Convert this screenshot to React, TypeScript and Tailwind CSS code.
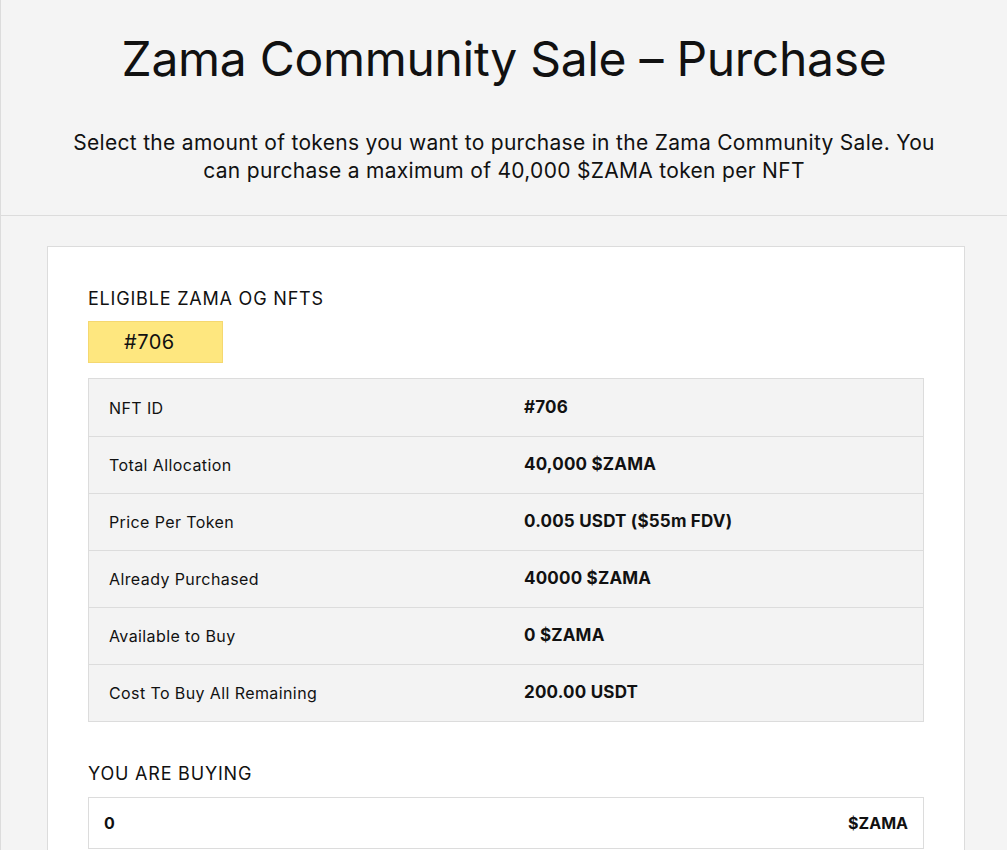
import React from 'react';

const rows = [
  { label: 'NFT ID', value: '#706' },
  { label: 'Total Allocation', value: '40,000 $ZAMA' },
  { label: 'Price Per Token', value: '0.005 USDT ($55m FDV)' },
  { label: 'Already Purchased', value: '40000 $ZAMA' },
  { label: 'Available to Buy', value: '0 $ZAMA' },
  { label: 'Cost To Buy All Remaining', value: '200.00 USDT' },
];

export default function App() {
  return (
    <div className="min-h-screen bg-[#f4f4f4] border-l border-[#dcdcdc] font-['Inter','Liberation_Sans',sans-serif] text-[#111]">
      {/* Header */}
      <div className="border-b border-[#dcdcdc] pt-[27px] pb-[30px] text-center">
        <h1 className="text-[48px] leading-[64px] font-normal tracking-[-0.3px]">
          Zama Community Sale – Purchase
        </h1>
        <p className="mt-[38px] mx-auto max-w-[900px] text-[21px] leading-[28px] tracking-[0.3px]">
          Select the amount of tokens you want to purchase in the Zama Community Sale. You can purchase a maximum of 40,000 $ZAMA token per NFT
        </p>
      </div>

      {/* Card */}
      <div className="pt-[30px] pl-[46px] pr-[42px]">
        <div className="bg-white border border-[#dcdcdc] px-[40px] pt-[40px] pb-[40px]">
          <div className="text-[18px] leading-[24px] uppercase tracking-[0.8px]">Eligible Zama OG NFTs</div>
          <div className="mt-[10px] inline-flex items-center h-[42px] w-[135px] pl-[35px] bg-[#fee77f] border border-[#f5d870] text-[20px] tracking-[0.5px]">
            #706
          </div>

          <div className="mt-[15px] border border-[#dcdcdc] bg-[#f3f3f3]">
            {rows.map((r, i) => (
              <div
                key={r.label}
                className={`flex items-center h-[57px] ${i > 0 ? 'border-t border-[#dcdcdc]' : ''}`}
              >
                <div className="w-[435px] pl-[20px] text-[16px] tracking-[0.4px]">{r.label}</div>
                <div className="text-[17px] font-bold tracking-[0.2px]">{r.value}</div>
              </div>
            ))}
          </div>

          <div className="mt-[40px] text-[18px] leading-[24px] uppercase tracking-[0.8px]">You are buying</div>
          <div className="mt-[11px] flex items-center justify-between h-[52px] border border-[#dcdcdc] px-[15px] text-[16px] font-bold">
            <span>0</span>
            <span>$ZAMA</span>
          </div>
        </div>
      </div>
    </div>
  );
}
